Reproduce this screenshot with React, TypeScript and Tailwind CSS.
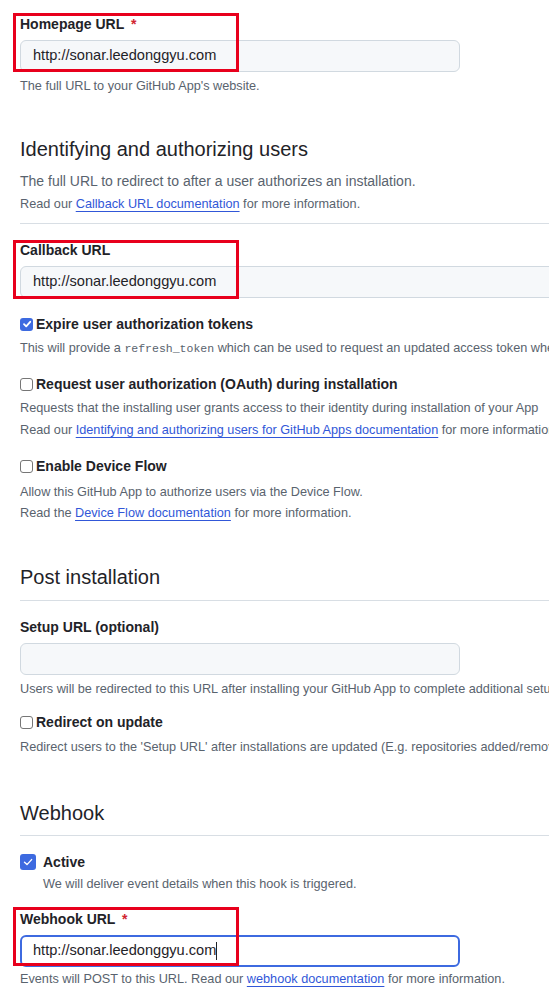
import React from "react";

const font = { fontFamily: '"Liberation Sans", Arial, sans-serif' };

function SmallBox() {
  return (
    <span className="inline-block w-[13px] h-[13px] border border-[#767676] rounded-[3px] bg-white mr-[3px] shrink-0" />
  );
}

function SmallChecked() {
  return (
    <span className="inline-flex items-center justify-center w-[13px] h-[13px] rounded-[3px] bg-[#3d6ae0] mr-[3px] shrink-0">
      <svg width="10" height="10" viewBox="0 0 10 10">
        <path d="M2 5.2 L4.2 7.4 L8.2 2.8" stroke="white" strokeWidth="1.8" fill="none" strokeLinecap="round" strokeLinejoin="round" />
      </svg>
    </span>
  );
}

function CheckRow({ checked, label }: { checked?: boolean; label: string }) {
  return (
    <div className="flex items-center h-[20px] text-[14px] font-bold text-[#1f2328]">
      {checked ? <SmallChecked /> : <SmallBox />}
      <span>{label}</span>
    </div>
  );
}

function Heading({ children }: { children: React.ReactNode }) {
  return <h2 className="text-[20px] leading-[30px] text-[#1f2328] font-normal">{children}</h2>;
}

function Link({ children }: { children: React.ReactNode }) {
  return <span className="text-[#3157d8] underline underline-offset-[3px] decoration-[#3157d8]">{children}</span>;
}

const note = "text-[12.7px] leading-[18px] text-[#59636e] whitespace-nowrap";

export default function App() {
  return (
    <div style={font} className="w-[549px] h-[992px] overflow-hidden bg-white relative">
      <div className="pl-[20px] w-[700px]">
        {/* Homepage URL */}
        <div className="pt-[14px] relative">
          <div className="text-[14px] font-bold text-[#1f2328] h-[20px] leading-[20px]">
            Homepage URL <span className="text-[#d1242f] ml-[3px]">*</span>
          </div>
          <div className="mt-[6px] w-[440px] h-[32px] rounded-[6px] border border-[#d1d9e0] bg-[#f6f8fa] flex items-center px-[12px] text-[14.6px] text-[#1f2328]">
            http://sonar.leedonggyu.com
          </div>
          <div className={`mt-[5px] ${note}`}>The full URL to your GitHub App's website.</div>
          <div className="absolute left-[-7px] top-[13px] w-[226px] h-[59px] border-[3px] border-[#e8001c]" />
        </div>

        {/* Identifying */}
        <div className="mt-[39px]">
          <Heading>Identifying and authorizing users</Heading>
          <div className="mt-[7px] text-[14px] leading-[20px] text-[#59636e]">
            The full URL to redirect to after a user authorizes an installation.
          </div>
          <div className={`mt-[4px] ${note}`}>
            Read our <Link>Callback URL documentation</Link> for more information.
          </div>
          <div className="mt-[10px] border-t border-[#d8dee4]" />
        </div>

        {/* Callback URL */}
        <div className="pt-[16px] relative">
          <div className="text-[14px] font-bold text-[#1f2328] h-[20px] leading-[20px]">Callback URL</div>
          <div className="mt-[6px] w-[600px] h-[32px] rounded-[6px] border border-[#d1d9e0] bg-[#f6f8fa] flex items-center px-[12px] text-[14.6px] text-[#1f2328]">
            http://sonar.leedonggyu.com
          </div>
          <div className="absolute left-[-7px] top-[16px] w-[226px] h-[59px] border-[3px] border-[#e8001c]" />
        </div>

        <div className="mt-[16px]">
          <CheckRow checked label="Expire user authorization tokens" />
          <div className={`mt-[5px] ${note}`}>
            This will provide a{" "}
            <span style={{ fontFamily: '"Liberation Mono", monospace' }} className="text-[11.5px]">refresh_token</span>{" "}
            which can be used to request an updated access token when this access token expires.
          </div>
        </div>

        <div className="mt-[16px]">
          <CheckRow label="Request user authorization (OAuth) during installation" />
          <div className={`mt-[5px] ${note}`}>
            Requests that the installing user grants access to their identity during installation of your App
          </div>
          <div className={`mt-[4px] ${note}`}>
            Read our <Link>Identifying and authorizing users for GitHub Apps documentation</Link> for more information.
          </div>
        </div>

        <div className="mt-[17px]">
          <CheckRow label="Enable Device Flow" />
          <div className={`mt-[7px] ${note}`}>Allow this GitHub App to authorize users via the Device Flow.</div>
          <div className={`mt-[3px] ${note}`}>
            Read the <Link>Device Flow documentation</Link> for more information.
          </div>
        </div>

        {/* Post installation */}
        <div className="mt-[40px]">
          <Heading>Post installation</Heading>
          <div className="mt-[8px] border-t border-[#d8dee4]" />
        </div>

        <div className="pt-[16px]">
          <div className="text-[14px] font-bold text-[#1f2328] h-[20px] leading-[20px]">Setup URL (optional)</div>
          <div className="mt-[6px] w-[440px] h-[32px] rounded-[6px] border border-[#d1d9e0] bg-[#f6f8fa]" />
          <div className={`mt-[5px] ${note}`}>
            Users will be redirected to this URL after installing your GitHub App to complete additional setup.
          </div>
        </div>

        <div className="mt-[14px]">
          <CheckRow label="Redirect on update" />
          <div className={`mt-[6px] ${note}`}>
            Redirect users to the 'Setup URL' after installations are updated (E.g. repositories added/removed).
          </div>
        </div>

        {/* Webhook */}
        <div className="mt-[42px]">
          <Heading>Webhook</Heading>
          <div className="mt-[7px] border-t border-[#d8dee4]" />
        </div>

        <div className="pt-[17px] flex">
          <span className="mt-[1px] inline-flex items-center justify-center w-[16px] h-[16px] rounded-[3px] bg-[#3d6ae0] shrink-0">
            <svg width="12" height="12" viewBox="0 0 12 12">
              <path d="M2.5 6.3 L5 8.6 L9.6 3.6" stroke="white" strokeWidth="1.4" fill="none" strokeLinecap="round" strokeLinejoin="round" />
            </svg>
          </span>
          <div className="ml-[7px]">
            <div className="text-[14px] font-bold text-[#1f2328] h-[18px] leading-[18px]">Active</div>
            <div className={`mt-[4px] ${note}`}>We will deliver event details when this hook is triggered.</div>
          </div>
        </div>

        <div className="pt-[16px] relative">
          <div className="text-[14px] font-bold text-[#1f2328] h-[20px] leading-[20px]">
            Webhook URL <span className="text-[#d1242f] ml-[3px]">*</span>
          </div>
          <div className="mt-[6px] w-[440px] h-[32px] rounded-[6px] border-2 border-[#3d6ae0] bg-white flex items-center px-[11px] text-[14.6px] text-[#1f2328]">
            http://sonar.leedonggyu.com<span className="inline-block w-[1px] h-[18px] bg-[#1f2328]" />
          </div>
          <div className={`mt-[3px] ${note}`}>
            Events will POST to this URL. Read our <Link>webhook documentation</Link> for more information.
          </div>
          <div className="absolute left-[-7px] top-[14px] w-[226px] h-[59px] border-[3px] border-[#e8001c]" />
        </div>
      </div>
    </div>
  );
}
